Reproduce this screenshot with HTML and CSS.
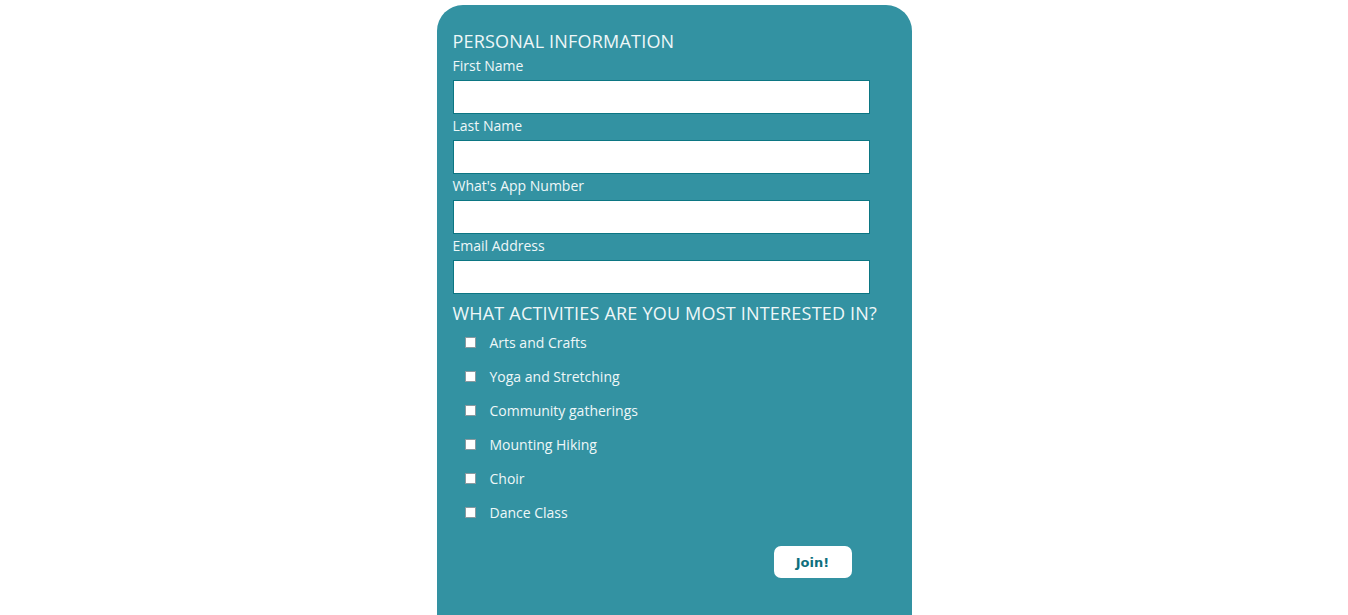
FILE: index.html
```html
<!DOCTYPE html>
<html>
<head>
<meta charset="utf-8">
<link rel="stylesheet" href="styles.css">
</head>
<body>
<form class="card">
  <h2 class="section-title">PERSONAL INFORMATION</h2>
  <label class="field-label">First Name</label>
  <input class="text-input" type="text">
  <label class="field-label">Last Name</label>
  <input class="text-input" type="text">
  <label class="field-label">What's App Number</label>
  <input class="text-input" type="text">
  <label class="field-label">Email Address</label>
  <input class="text-input" type="text">
  <h2 class="section-title section-title--second">WHAT ACTIVITIES ARE YOU MOST INTERESTED IN?</h2>
  <ul class="options">
    <li class="option"><input class="check" type="checkbox"><span>Arts and Crafts</span></li>
    <li class="option"><input class="check" type="checkbox"><span>Yoga and Stretching</span></li>
    <li class="option"><input class="check" type="checkbox"><span>Community gatherings</span></li>
    <li class="option"><input class="check" type="checkbox"><span>Mounting Hiking</span></li>
    <li class="option"><input class="check" type="checkbox"><span>Choir</span></li>
    <li class="option"><input class="check" type="checkbox"><span>Dance Class</span></li>
  </ul>
  <div class="actions">
    <button class="join" type="button">Join!</button>
  </div>
</form>
</body>
</html>
```

FILE: styles.css
```css
html, body {
  margin: 0;
  padding: 0;
  background: #ffffff;
}
body {
  font-family: "Open Sans", "Noto Sans", sans-serif;
  overflow: hidden;
}
.card {
  box-sizing: border-box;
  width: 475px;
  margin: 5px auto 0;
  min-height: 640px;
  background: #3392a2;
  border-radius: 26px 26px 0 0;
  padding: 25px 16px 0 16px;
  display: flex;
  flex-direction: column;
  align-items: flex-start;
}
.section-title {
  margin: 0 0 5px;
  font-weight: 400;
  font-size: 18px;
  line-height: 22px;
  color: #eef7f8;
  letter-spacing: 0.2px;
}
.section-title--second {
  margin-top: 5px;
  margin-bottom: 1px;
}
.field-label {
  font-size: 14px;
  line-height: 18px;
  color: #eef7f8;
  margin-bottom: 5px;
}
.text-input {
  box-sizing: border-box;
  width: 417px;
  height: 34px;
  margin: 0 0 3px;
  border: 1px solid #0c7683;
  background: #ffffff;
  padding: 0 6px;
  outline: none;
}
.options {
  list-style: none;
  margin: 0;
  padding: 0;
  display: flex;
  flex-direction: column;
}
.option {
  height: 34px;
  display: flex;
  align-items: center;
  font-size: 14px;
  color: #eef7f8;
}
.check {
  appearance: none;
  -webkit-appearance: none;
  box-sizing: border-box;
  width: 11px;
  height: 11px;
  margin: 0 14px 0 12px;
  background: #ffffff;
  border: 1px solid #8a9aa0;
}
.actions {
  align-self: stretch;
  display: flex;
  justify-content: flex-end;
  padding: 17px 44px 0 0;
}
.join {
  width: 78px;
  height: 32px;
  border: none;
  border-radius: 7px;
  background: #ffffff;
  color: #0f6f7d;
  font-family: "DejaVu Sans", Verdana, sans-serif;
  font-weight: 700;
  font-size: 13px;
  cursor: pointer;
}
```
